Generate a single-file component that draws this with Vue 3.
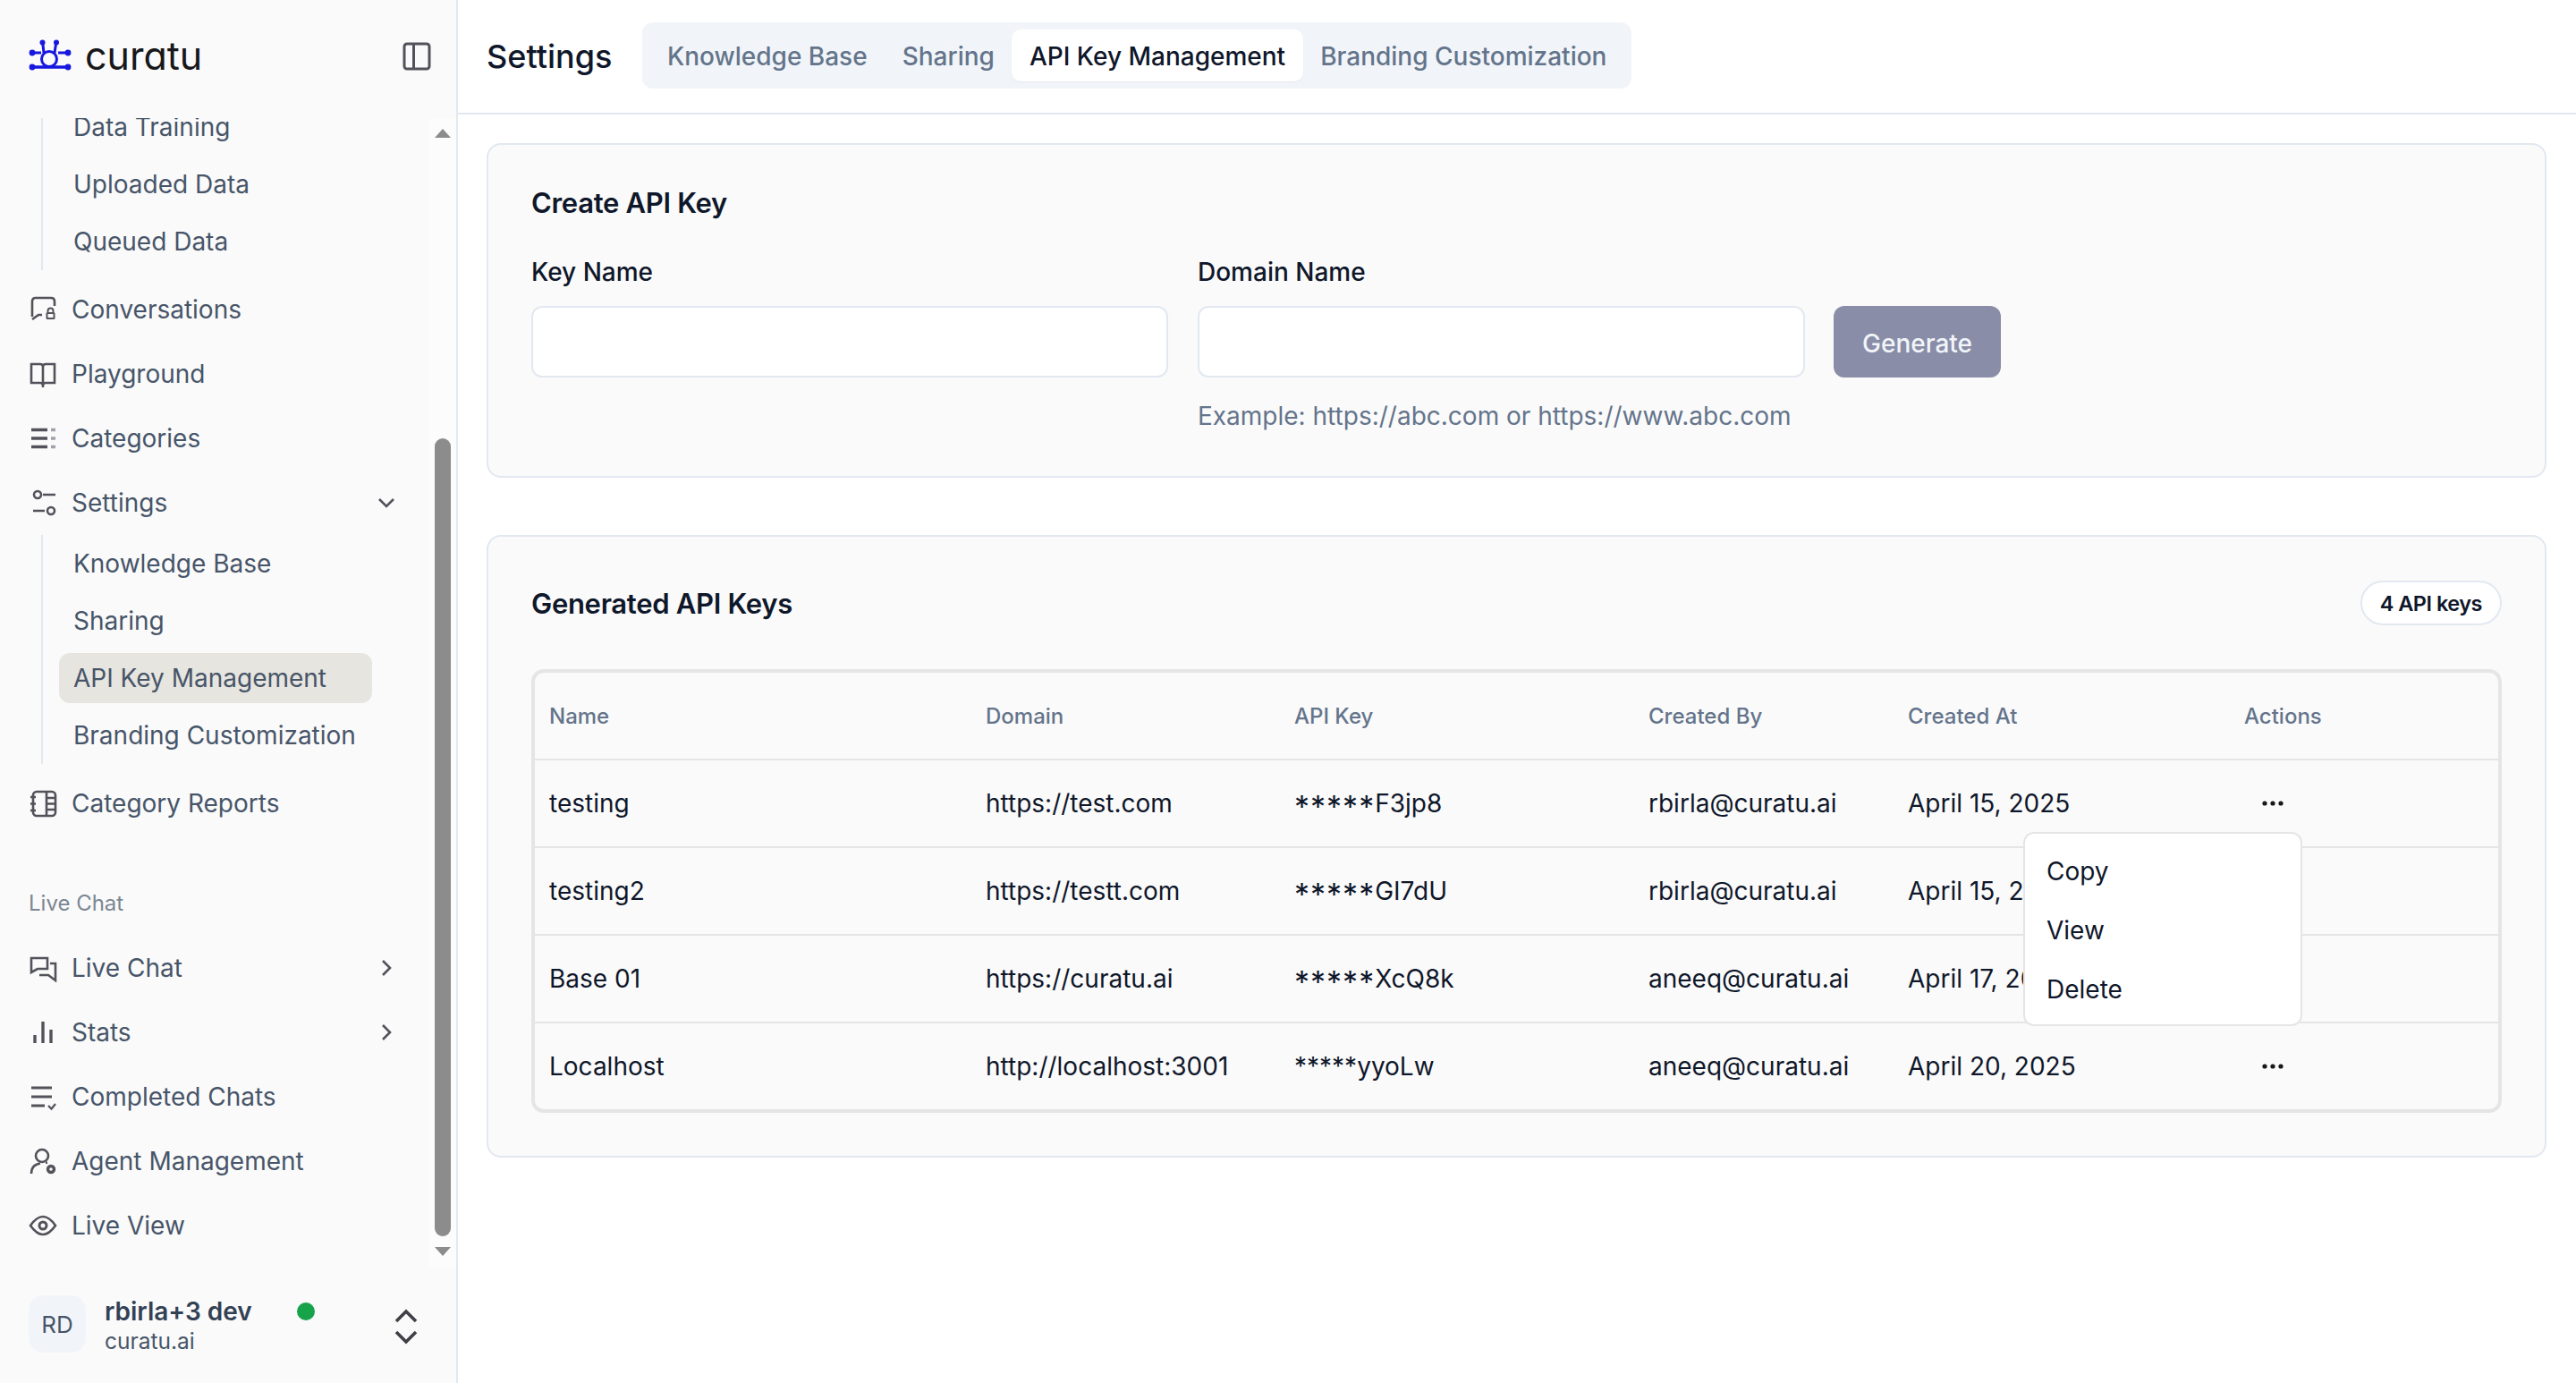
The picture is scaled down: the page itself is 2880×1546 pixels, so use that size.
<template>
  <div class="app">
    <aside class="sidebar">
      <div class="brand">
        <svg class="logo" width="48" height="38" viewBox="0 0 48 38" fill="none" stroke="#1717e0" stroke-width="3">
          <circle cx="23" cy="22" r="8.5" />
          <path d="M15.5 2 L17 15 M31 2 L29 15 M4 15 H14 M33 15 H44" />
          <path d="M4 31 H44" stroke-width="3.6" />
          <g fill="#1717e0" stroke="none">
            <circle cx="15.5" cy="3.5" r="3" />
            <circle cx="31" cy="3.5" r="3" />
            <circle cx="4" cy="15" r="3.4" />
            <circle cx="44" cy="15" r="3.4" />
            <circle cx="4" cy="31" r="3.4" />
            <circle cx="44" cy="31" r="3.4" />
          </g>
        </svg>
        <span class="logo-text">curatu</span>
        <svg class="collapse" width="32" height="32" viewBox="0 0 32 32" fill="none" stroke="#52525b" stroke-width="3">
          <rect x="2" y="2" width="28" height="28" rx="3" />
          <path d="M12.5 2 V30" />
        </svg>
      </div>

      <div class="nav-area">
        <nav class="nav">
          <div class="sub-group">
            <a v-for="s in trainingItems" :key="s" class="sub-item">{{ s }}</a>
          </div>
          <template v-for="item in mainItems" :key="item.label">
            <a class="nav-item">
              <svg class="nav-icon" width="32" height="32" viewBox="0 0 32 32" fill="none" stroke="#52525b" stroke-width="2.6" v-html="icons[item.icon]"></svg>
              <span>{{ item.label }}</span>
              <svg v-if="item.open" class="chev" width="24" height="24" viewBox="0 0 24 24" fill="none" stroke="#52525b" stroke-width="2.6"><path d="M4 8 L12 16 L20 8" /></svg>
            </a>
            <div v-if="item.open" class="sub-group">
              <a v-for="s in settingsItems" :key="s" class="sub-item" :class="{ active: s === 'API Key Management' }">{{ s }}</a>
            </div>
          </template>
          <div class="section-label">Live Chat</div>
          <a v-for="item in chatItems" :key="item.label" class="nav-item">
            <svg class="nav-icon" width="32" height="32" viewBox="0 0 32 32" fill="none" stroke="#52525b" stroke-width="2.6" v-html="icons[item.icon]"></svg>
            <span>{{ item.label }}</span>
            <svg v-if="item.more" class="chev" width="24" height="24" viewBox="0 0 24 24" fill="none" stroke="#52525b" stroke-width="2.6"><path d="M8 4 L16 12 L8 20" /></svg>
          </a>
        </nav>
        <div class="scrollbar">
          <span class="arrow-up"></span>
          <span class="thumb"></span>
          <span class="arrow-down"></span>
        </div>
      </div>

      <div class="account">
        <div class="avatar">RD</div>
        <div class="who">
          <div class="who-name">rbirla+3 dev</div>
          <div class="who-org">curatu.ai</div>
        </div>
        <span class="status"></span>
        <svg class="switch" width="28" height="40" viewBox="0 0 28 40" fill="none" stroke="#3f3f46" stroke-width="3.6"><path d="M3 14 L14 3 L25 14 M3 26 L14 37 L25 26" /></svg>
      </div>
    </aside>

    <main class="main">
      <header class="topbar">
        <h1>Settings</h1>
        <div class="tabs">
          <span v-for="t in settingsItems" :key="t" class="tab" :class="{ active: t === 'API Key Management' }">{{ t }}</span>
        </div>
      </header>

      <div class="content">
        <section class="card create">
          <h2>Create API Key</h2>
          <div class="form">
            <div class="field key-field">
              <label>Key Name</label>
              <input type="text" />
            </div>
            <div class="field domain-field">
              <label>Domain Name</label>
              <input type="text" />
              <p class="hint">Example: https://abc.com or https://www.abc.com</p>
            </div>
            <button class="generate">Generate</button>
          </div>
        </section>

        <section class="card keys">
          <div class="keys-head">
            <h2>Generated API Keys</h2>
            <span class="pill">4 API keys</span>
          </div>
          <div class="table-wrap">
            <table>
              <colgroup>
                <col class="c1" /><col class="c2" /><col class="c3" /><col class="c4" /><col class="c5" /><col class="c6" />
              </colgroup>
              <thead>
                <tr>
                  <th v-for="h in headers" :key="h">{{ h }}</th>
                </tr>
              </thead>
              <tbody>
                <tr v-for="row in rows" :key="row.name">
                  <td>{{ row.name }}</td>
                  <td>{{ row.domain }}</td>
                  <td><span :class="{ 'mask-wide': row.wide }">*****</span>{{ row.key }}</td>
                  <td>{{ row.by }}</td>
                  <td>{{ row.at }}</td>
                  <td>
                    <svg class="dots" width="26" height="8" viewBox="0 0 26 8" fill="#18181b">
                      <circle cx="4" cy="4" r="2.6" /><circle cx="13" cy="4" r="2.6" /><circle cx="22" cy="4" r="2.6" />
                    </svg>
                  </td>
                </tr>
              </tbody>
            </table>
            <div class="menu">
              <div v-for="m in menuItems" :key="m" class="menu-item">{{ m }}</div>
            </div>
          </div>
        </section>
      </div>
    </main>
  </div>
</template>

<script setup>
const trainingItems = ['Data Training', 'Uploaded Data', 'Queued Data']
const settingsItems = ['Knowledge Base', 'Sharing', 'API Key Management', 'Branding Customization']

const mainItems = [
  { label: 'Conversations', icon: 'convo' },
  { label: 'Playground', icon: 'book' },
  { label: 'Categories', icon: 'list' },
  { label: 'Settings', icon: 'sliders', open: true },
  { label: 'Category Reports', icon: 'notebook' }
]

const chatItems = [
  { label: 'Live Chat', icon: 'chats', more: true },
  { label: 'Stats', icon: 'bars', more: true },
  { label: 'Completed Chats', icon: 'listCheck' },
  { label: 'Agent Management', icon: 'agent' },
  { label: 'Live View', icon: 'eye' }
]

const icons = {
  convo: '<path d="M12 3 H25 Q29 3 29 7 V12 M4 24 V7 Q4 3 8 3 H12 M4 27 L11 22 H15" /><rect x="19.500" y="19" width="10" height="8" rx="1.500" fill="#52525b" stroke="none"/><rect x="21.500" y="21" width="6" height="4" fill="#fafafa" stroke="none"/><path d="M21.500 19 V17.500 A3 3 0 0 1 27.500 17.500 V19" stroke-width="2"/>',
  book: '<path d="M16 7 V31 M3 5 H13 Q16 5 16 8 Q16 5 19 5 H29 V26 H19 Q16 26 16 29 Q16 26 13 26 H3 Z" />',
  list: '<path d="M3 6.500 H21 M3 16 H21 M3 25.500 H21" stroke-width="3.400"/><path d="M25 6.500 H30 M25 16 H30 M25 25.500 H30" stroke-width="3.400" stroke="#a1a1aa"/>',
  sliders: '<path d="M16 7 H30 M5 25 H18" /><circle cx="10" cy="7" r="4" /><circle cx="25" cy="25" r="4" />',
  notebook: '<rect x="5" y="3" width="25" height="27" rx="4" /><path d="M20 3 V30 M20 10 H30 M20 16.500 H30 M20 23 H30 M2 9 H8 M2 16.500 H8 M2 24 H8" />',
  chats: '<path d="M3 5 H21 V17 H10 L3 21 Z" /><path d="M24 11 H30 V30 L22 24 H12" />',
  bars: '<path d="M7 28 V19 M16 28 V4 M25 28 V13" stroke-width="3.400"/>',
  listCheck: '<path d="M3 6 H26 M3 16 H26 M3 26 H18" stroke-width="3.200"/><path d="M22 26 L25.500 29.500 L30 24" stroke-width="2.200"/>',
  agent: '<circle cx="15" cy="10" r="7" /><path d="M3 30 Q3 20 13 18.500 M19 17.800 H21" /><circle cx="25" cy="25" r="3.500" stroke-width="3.400"/>',
  eye: '<path d="M2 16 Q9 6 16 6 Q23 6 30 16 Q23 26 16 26 Q9 26 2 16 Z" /><circle cx="16" cy="16" r="4" stroke-width="3"/>'
}

const headers = ['Name', 'Domain', 'API Key', 'Created By', 'Created At', 'Actions']

const rows = [
  { name: 'testing', domain: 'https://test.com', key: 'F3jp8', wide: true, by: 'rbirla@curatu.ai', at: 'April 15, 2025' },
  { name: 'testing2', domain: 'https://testt.com', key: 'GI7dU', wide: true, by: 'rbirla@curatu.ai', at: 'April 15, 2025' },
  { name: 'Base 01', domain: 'https://curatu.ai', key: 'XcQ8k', wide: true, by: 'aneeq@curatu.ai', at: 'April 17, 2025' },
  { name: 'Localhost', domain: 'http://localhost:3001', key: 'yyoLw', wide: false, by: 'aneeq@curatu.ai', at: 'April 20, 2025' }
]

const menuItems = ['Copy', 'View', 'Delete']
</script>

<style scoped>
.app {
  display: flex;
  width: 2880px;
  height: 1546px;
  overflow: hidden;
  font-family: Inter, "Liberation Sans", sans-serif;
  background: #fff;
  color: #0f172a;
}

/* sidebar */
.sidebar {
  width: 512px;
  flex: none;
  display: flex;
  flex-direction: column;
  background: #fafafa;
  border-right: 2px solid #e2e8f0;
  box-sizing: border-box;
}

.brand {
  height: 132px;
  flex: none;
  display: flex;
  align-items: center;
  padding: 0 28px 6px 32px;
  box-sizing: border-box;
}

.logo-text {
  margin-left: 15px;
  font-size: 43px;
  font-weight: 400;
  line-height: 1.2;
  color: #18181b;
  font-feature-settings: "cv11" 1;
}

.collapse {
  margin-left: auto;
}

.nav-area {
  height: 1285px;
  flex: none;
  display: flex;
  overflow: hidden;
}

.nav {
  flex: 1;
  margin-top: -22px;
  min-width: 0;
  color: #475569;
  font-size: 28px;
}

.nav-item {
  height: 72px;
  display: flex;
  align-items: center;
  padding-left: 32px;
  gap: 16px;
}

.chev {
  margin-left: auto;
  margin-right: 36px;
}

.sub-group {
  display: flex;
  flex-direction: column;
  gap: 8px;
  margin: 0 0 8px 46px;
  padding: 4px 0 4px 18px;
  border-left: 2px solid #e2e8f0;
}

.sub-item {
  display: flex;
  align-items: center;
  height: 56px;
  width: 350px;
  padding-left: 16px;
  box-sizing: border-box;
  border-radius: 12px;
}

.sub-item.active {
  background: #e7e5df;
}

.section-label {
  margin: 60px 0 20px 32px;
  height: 32px;
  line-height: 32px;
  font-size: 24px;
  color: #7b8794;
}

.scrollbar {
  width: 30px;
  flex: none;
  display: flex;
  flex-direction: column;
  align-items: center;
  background: #fcfcfc;
}

.arrow-up,
.arrow-down {
  width: 0;
  height: 0;
  border-left: 9px solid transparent;
  border-right: 9px solid transparent;
}

.arrow-up {
  margin-top: 12px;
  border-bottom: 10px solid #8c8c8c;
}

.arrow-down {
  margin-top: 12px;
  border-top: 10px solid #8c8c8c;
}

.thumb {
  width: 18px;
  height: 892px;
  margin-top: 336px;
  background: #8c8c8c;
  border-radius: 9px;
}

.account {
  flex: 1;
  display: flex;
  align-items: flex-start;
  padding: 31px 0 0 32px;
}

.avatar {
  width: 64px;
  height: 64px;
  flex: none;
  display: flex;
  align-items: center;
  justify-content: center;
  background: #f1f5f9;
  border-radius: 16px;
  font-size: 26px;
  color: #475569;
}

.who {
  margin-left: 21px;
  width: 215px;
}

.who-name {
  font-size: 28px;
  font-weight: 600;
  line-height: 36px;
  color: #334155;
  white-space: nowrap;
}

.who-org {
  font-size: 24.5px;
  line-height: 30px;
  color: #475569;
}

.status {
  width: 20px;
  height: 20px;
  margin-top: 8px;
  background: #16a34a;
  border-radius: 50%;
  flex: none;
}

.switch {
  margin: 15px 0 0 88px;
}

/* main */
.main {
  flex: 1;
  min-width: 0;
  display: flex;
  flex-direction: column;
}

.topbar {
  height: 128px;
  flex: none;
  display: flex;
  align-items: center;
  padding-left: 32px;
  border-bottom: 2px solid #e2e8f0;
  box-sizing: border-box;
}

.topbar h1 {
  margin: 0;
  width: 174px;
  font-size: 36px;
  font-weight: 500;
  color: #0f172a;
}

.tabs {
  display: flex;
  height: 74px;
  box-sizing: border-box;
  align-items: center;
  padding: 0 8.5px;
  background: #f1f5f9;
  border-radius: 12px;
  margin-top: -2px;
}

.tab {
  display: flex;
  align-items: center;
  height: 58px;
  padding: 2px 19.5px 0;
  box-sizing: border-box;
  font-size: 28px;
  font-weight: 500;
  color: #64748b;
  border-radius: 10px;
}

.tab.active {
  color: #0f172a;
  background: #fff;
  box-shadow: 0 1px 2px rgba(0, 0, 0, 0.05);
}

.content {
  padding: 32px 33px 0 32px;
  display: flex;
  flex-direction: column;
  gap: 64px;
}

.card {
  border: 2px solid #e2e8f0;
  border-radius: 16px;
  background: #fafafa;
  box-sizing: border-box;
  padding: 0 48px;
}

.card h2 {
  margin: 0;
  font-size: 31px;
  font-weight: 600;
  color: #0f172a;
  letter-spacing: -0.3px;
}

.create {
  height: 374px;
  padding-top: 46px;
}

.create h2 {
  line-height: 38px;
}

.form {
  display: flex;
  align-items: flex-start;
  margin-top: 39px;
}

.field label {
  display: block;
  height: 40px;
  line-height: 38px;
  font-size: 28px;
  font-weight: 500;
  color: #0f172a;
  margin-bottom: 17px;
}

.field input {
  display: block;
  width: 100%;
  height: 80px;
  box-sizing: border-box;
  background: #fff;
  border: 2px solid #e2e8f0;
  border-radius: 12px;
  outline: none;
}

.key-field {
  width: 712px;
  margin-right: 33px;
}

.domain-field {
  width: 679px;
  margin-right: 32px;
}

.hint {
  margin: 24px 0 0;
  font-size: 28px;
  line-height: 38px;
  color: #64748b;
  white-space: nowrap;
}

.generate {
  margin-top: 57px;
  width: 187px;
  height: 80px;
  padding: 3px 0 0;
  border: none;
  border-radius: 12px;
  background: #8a8da8;
  color: #f1f5f9;
  font-family: inherit;
  font-size: 28px;
  font-weight: 500;
}

.keys {
  height: 696px;
  padding-top: 48px;
}

.keys-head {
  display: flex;
  align-items: center;
  justify-content: space-between;
  height: 52px;
}

.pill {
  display: flex;
  align-items: center;
  height: 50px;
  padding: 0 20px;
  box-sizing: border-box;
  border: 2px solid #e2e8f0;
  border-radius: 25px;
  background: #fff;
  font-size: 23.5px;
  font-weight: 600;
  letter-spacing: -0.5px;
  color: #0f172a;
}

.table-wrap {
  position: relative;
  margin-top: 48px;
  border: 4px solid #e5e5e5;
  border-radius: 14px;
}

table {
  width: 100%;
  table-layout: fixed;
  border-collapse: collapse;
}

.c1 { width: 488px; }
.c2 { width: 345px; }
.c3 { width: 396px; }
.c4 { width: 290px; }
.c5 { width: 376px; }

th {
  height: 96px;
  padding: 0 0 0 16px;
  text-align: left;
  font-size: 24px;
  font-weight: 500;
  color: #64748b;
  border-bottom: 2px solid #e5e5e5;
}

td {
  height: 96px;
  padding: 0 0 0 16px;
  font-size: 28px;
  color: #0f172a;
  border-bottom: 2px solid #e5e5e5;
  white-space: nowrap;
}

tbody tr:last-child td {
  border-bottom: none;
}

.mask-wide {
  position: relative;
  top: 6px;
  font-size: 34px;
  line-height: 0;
  letter-spacing: 1px;
}

.dots {
  display: block;
  margin-left: 19px;
}

.menu {
  position: absolute;
  left: 1664px;
  top: 178px;
  width: 312px;
  height: 217px;
  box-sizing: border-box;
  padding: 9px 0;
  background: #fff;
  border: 2px solid #e5e5e5;
  border-radius: 12px;
}

.menu-item {
  height: 66px;
  line-height: 66px;
  padding-left: 24px;
  font-size: 28px;
  color: #0f172a;
}
</style>

<style>
html,
body {
  margin: 0;
  padding: 0;
}
</style>
